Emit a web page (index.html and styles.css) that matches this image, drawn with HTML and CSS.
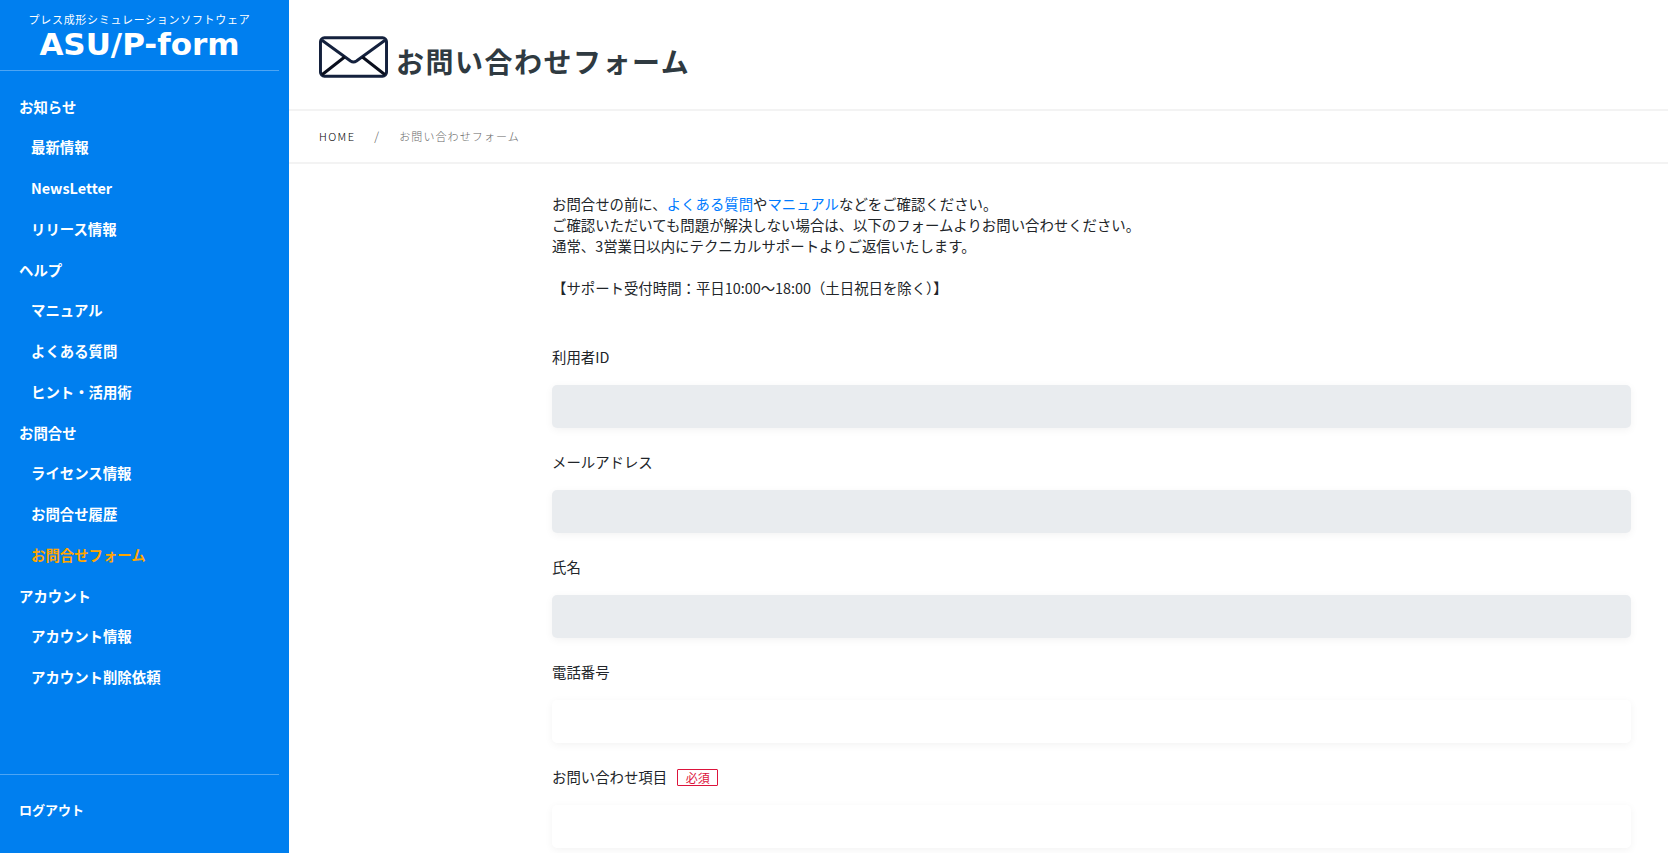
FILE: index.html
```html
<!DOCTYPE html>
<html lang="ja">
<head>
<meta charset="utf-8">
<title>お問い合わせフォーム</title>
<link rel="stylesheet" href="styles.css">
</head>
<body>
<div class="app">
  <aside class="sidebar">
    <div class="brand">
      <div class="tagline">プレス成形シミュレーションソフトウェア</div>
      <div class="logo">ASU/P-form</div>
    </div>
    <nav class="nav">
      <a class="nav-head">お知らせ</a>
      <a class="nav-item">最新情報</a>
      <a class="nav-item">NewsLetter</a>
      <a class="nav-item">リリース情報</a>
      <a class="nav-head">ヘルプ</a>
      <a class="nav-item">マニュアル</a>
      <a class="nav-item">よくある質問</a>
      <a class="nav-item">ヒント・活用術</a>
      <a class="nav-head">お問合せ</a>
      <a class="nav-item">ライセンス情報</a>
      <a class="nav-item">お問合せ履歴</a>
      <a class="nav-item active">お問合せフォーム</a>
      <a class="nav-head">アカウント</a>
      <a class="nav-item">アカウント情報</a>
      <a class="nav-item">アカウント削除依頼</a>
    </nav>
    <div class="logout"><a>ログアウト</a></div>
  </aside>
  <main class="main">
    <header class="page-head">
      <svg class="mail-icon" viewBox="0 0 70 42" width="69" height="42" aria-hidden="true">
        <rect x="1.5" y="1.5" width="67" height="39" rx="4" fill="#fff" stroke="#14213d" stroke-width="3"/>
        <path d="M3 4 L32 25 Q35 27 38 25 L67 4" fill="none" stroke="#14213d" stroke-width="3"/>
        <path d="M3 39 L26 21 M67 39 L44 21" fill="none" stroke="#0a0f1e" stroke-width="3"/>
      </svg>
      <h1 class="page-title">お問い合わせフォーム</h1>
    </header>
    <div class="crumbs">
      <a class="crumb-home">HOME</a>
      <span class="crumb-sep">/</span>
      <span class="crumb-current">お問い合わせフォーム</span>
    </div>
    <section class="content">
      <p class="intro">お問合せの前に、<a class="link">よくある質問</a>や<a class="link">マニュアル</a>などをご確認ください。<br>ご確認いただいても問題が解決しない場合は、以下のフォームよりお問い合わせください。<br>通常、3営業日以内にテクニカルサポートよりご返信いたします。<br><br>【サポート受付時間：平日10:00～18:00（土日祝日を除く）】</p>
      <form class="form">
        <div class="field"><label class="label">利用者ID</label><div class="input readonly"></div></div>
        <div class="field"><label class="label">メールアドレス</label><div class="input readonly"></div></div>
        <div class="field"><label class="label">氏名</label><div class="input readonly"></div></div>
        <div class="field"><label class="label">電話番号</label><div class="input"></div></div>
        <div class="field"><label class="label">お問い合わせ項目<span class="required">必須</span></label><div class="input"></div></div>
      </form>
    </section>
  </main>
</div>
</body>
</html>
```
FILE: styles.css
```css
* { box-sizing: border-box; }
html, body { margin: 0; height: 100%; overflow: hidden; }
body {
  font-family: "Noto Sans CJK JP", "Noto Sans", sans-serif;
  color: #212529;
  background: #fff;
}
.app { display: flex; height: 853px; }

.sidebar {
  width: 289px;
  flex: none;
  background: #007fef;
  color: #fff;
  padding-right: 10px;
  display: flex;
  flex-direction: column;
}
.brand {
  height: 71px;
  flex: none;
  border-bottom: 1px solid rgba(255, 255, 255, .3);
  text-align: center;
  padding-top: 11px;
}
.tagline { font-size: 11px; line-height: 16px; letter-spacing: .7px; }
.logo {
  font-family: "DejaVu Sans", sans-serif;
  font-weight: 700;
  font-size: 31px;
  line-height: 34px;
}
.nav { display: flex; flex-direction: column; padding-top: 15.5px; flex: 1; }
.nav-head, .nav-item {
  display: block;
  height: 40.75px;
  line-height: 40px;
  font-size: 14.4px;
  font-weight: 700;
  color: #fff;
}
.nav-head { padding-left: 19px; }
.nav-item { padding-left: 31px; }
.nav-item.active { color: #ffa500; }
.logout {
  height: 79px;
  flex: none;
  border-top: 1px solid rgba(255, 255, 255, .3);
  padding: 25px 0 0 19px;
  font-size: 13px;
  line-height: 20px;
  font-weight: 700;
}

.main { flex: 1; min-width: 0; display: flex; flex-direction: column; }
.page-head {
  height: 111px;
  flex: none;
  border-bottom: 2px solid #f3f3f3;
  padding: 36px 0 0 30px;
  display: flex;
  align-items: flex-start;
  gap: 8px;
}
.mail-icon { flex: none; }
.page-title {
  margin: 5px 0 0;
  font-size: 28px;
  line-height: 40px;
  font-weight: 700;
  letter-spacing: 1.5px;
  color: #2f3a41;
}
.crumbs {
  height: 53px;
  flex: none;
  border-bottom: 2px solid #f3f3f3;
  padding: 0 0 2px 30px;
  display: flex;
  align-items: center;
  font-size: 11px;
  letter-spacing: 1.1px;
}
.crumb-home { color: #000; letter-spacing: 1.4px; font-weight: 300; }
.crumb-sep { color: #555; margin: 0 19px; font-size: 12px; font-weight: 300; }
.crumb-current { color: #666; font-weight: 300; }

.content { flex: none; padding: 29px 37px 0 263px; }
.intro {
  margin: 0;
  font-size: 14.4px;
  line-height: 21px;
}
.link { color: #007bff; }
.form { padding-top: 49px; }
.field { height: 105px; }
.label {
  display: block;
  font-size: 14.4px;
  line-height: 19px;
  height: 38px;
}
.input {
  height: 43px;
  border-radius: 5px;
  background: #fff;
  box-shadow: 0 2px 8px rgba(0, 0, 0, .05);
}
.input.readonly { background: #e9ecef; }
.required {
  display: inline-block;
  margin-left: 10px;
  width: 41px;
  height: 17px;
  border: 1px solid #dc143c;
  border-radius: 1px;
  color: #dc143c;
  font-size: 12px;
  line-height: 15px;
  text-align: center;
  vertical-align: 0;
}
```
